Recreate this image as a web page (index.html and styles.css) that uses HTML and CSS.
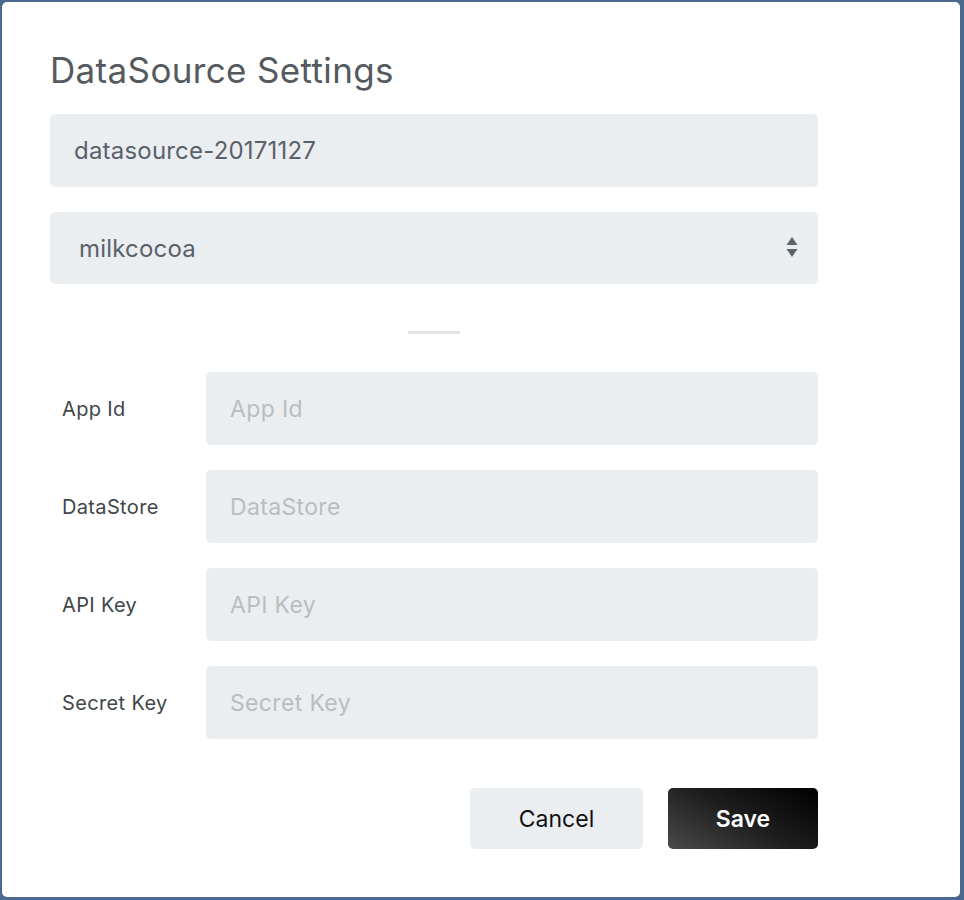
FILE: index.html
```html
<!DOCTYPE html>
<html>
<head>
<meta charset="utf-8">
<link rel="stylesheet" href="styles.css">
</head>
<body>
<div class="dialog">
  <h1 class="title">DataSource Settings</h1>
  <div class="field">datasource-20171127</div>
  <div class="field select">
    <span class="select-text">milkcocoa</span>
    <svg class="arrows" width="12" height="22" viewBox="0 0 12 22"><path d="M6 0 L11.5 8 L0.5 8 Z" fill="#5b656b"/><path d="M0.5 12 L11.5 12 L6 20 Z" fill="#5b656b"/></svg>
  </div>
  <div class="divider"></div>
  <div class="rows">
    <div class="row"><span class="label">App Id</span><div class="input">App Id</div></div>
    <div class="row"><span class="label">DataStore</span><div class="input">DataStore</div></div>
    <div class="row"><span class="label">API Key</span><div class="input">API Key</div></div>
    <div class="row"><span class="label">Secret Key</span><div class="input">Secret Key</div></div>
  </div>
  <div class="actions">
    <button class="btn cancel">Cancel</button>
    <button class="btn save">Save</button>
  </div>
</div>
</body>
</html>
```
FILE: styles.css
```css
html, body {
  margin: 0;
  padding: 0;
  height: 100%;
}
body {
  background: #4a6890;
  padding: 2px 4px 3px 2px;
  box-sizing: border-box;
  font-family: "Inter", "Open Sans", sans-serif;
}
.dialog {
  background: #fff;
  border-radius: 5px;
  height: 100%;
  box-sizing: border-box;
  padding: 46px 142px 0 48px;
}
.title {
  margin: 0 0 22px 0;
  font-weight: 400;
  font-size: 35px;
  line-height: 44px;
  color: #545a5e;
  letter-spacing: 0.35px;
}
.field {
  height: 73px;
  background: #ebeef0;
  border-radius: 5px;
  display: flex;
  align-items: center;
  padding-left: 24px;
  font-size: 24px;
  letter-spacing: 0.2px;
  color: #59616a;
  margin-bottom: 25px;
}
.field.select {
  height: 72px;
  padding-left: 29px;
  padding-right: 20px;
  justify-content: space-between;
  margin-bottom: 0;
}
.arrows {
  display: block;
}
.divider {
  width: 52px;
  height: 3px;
  background: #e4e4e4;
  margin: 47px auto 38px;
}
.rows {
  display: flex;
  flex-direction: column;
  gap: 25px;
}
.row {
  display: flex;
  align-items: center;
}
.label {
  width: 156px;
  padding-left: 12px;
  box-sizing: border-box;
  font-size: 20px;
  letter-spacing: 0.35px;
  color: #40474b;
}
.input {
  flex: 1;
  height: 73px;
  background: #ebeef0;
  border-radius: 5px;
  display: flex;
  align-items: center;
  padding-left: 24px;
  font-size: 23px;
  letter-spacing: 0.35px;
  color: #b9bdc0;
}
.actions {
  display: flex;
  justify-content: flex-end;
  gap: 25px;
  margin-top: 49px;
}
.btn {
  height: 61px;
  border: none;
  border-radius: 5px;
  font-family: "Inter", "Open Sans", sans-serif;
  font-size: 23px;
  padding: 0;
}
.cancel {
  width: 173px;
  background: #ebeef0;
  color: #111;
}
.save {
  width: 150px;
  background: linear-gradient(30deg, #4a4a4a 0%, #1e1e1e 50%, #000 100%);
  color: #fff;
  font-weight: 600;
}
```
